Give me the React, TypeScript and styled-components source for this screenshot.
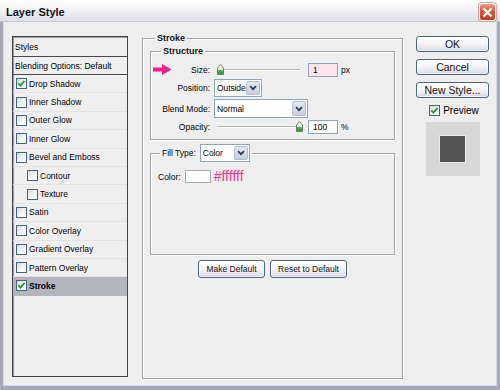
import React from "react";
import styled, { createGlobalStyle } from "styled-components";

const Global = createGlobalStyle`
  html, body { margin: 0; padding: 0; background: #eeeeee; }
  body { font-family: "Liberation Sans", Arial, sans-serif; font-size: 8.5px; color: #000; }
  * { box-sizing: border-box; }
`;

const Window = styled.div`
  width: 500px;
  height: 390px;
  display: flex;
  flex-direction: column;
  background: #eeeeee;
  overflow: hidden;
`;

const TitleBar = styled.div`
  height: 22px;
  flex: none;
  display: flex;
  align-items: flex-start;
  justify-content: space-between;
  padding: 0 4px 0 6px;
  background: linear-gradient(to bottom, #ffffff 0%, #f4f4f8 40%, #dedee8 100%);
  border-bottom: 1px solid #c4c4d2;
`;

const Title = styled.div`
  margin-top: 6px;
  font-size: 11px;
  line-height: 13px;
  font-weight: bold;
  color: #111;
`;

const CloseButton = styled.div`
  margin-top: 3px;
  width: 17px;
  height: 18px;
  border: 1px solid #fff;
  border-radius: 3px;
  background: linear-gradient(to bottom, #eaa18c 0%, #d9573a 45%, #c53a1d 100%);
  box-shadow: 0 0 0 1px #c9a79f;
  display: flex;
  align-items: center;
  justify-content: center;
`;

const Frame = styled.div`
  flex: 1;
  display: flex;
  align-items: flex-start;
  padding: 11px 8px 0 9px;
  border-style: solid;
  border-color: #a8a8b8;
  border-width: 0 3px 4px 3px;
  box-shadow: inset 1px 0 0 #d8d8e2, inset -1px 0 0 #d8d8e2, inset 0 -1px 0 #d8d8e2;
`;

/* ---------- left style list ---------- */

const StylePanel = styled.div`
  margin-top: 3px;
  width: 116px;
  height: 341px;
  flex: none;
  border: 1px solid #444;
  box-shadow: inset 1px 1px 0 #9a9a9a;
  background: #efefef;
  display: flex;
  flex-direction: column;
`;

const PanelHeader = styled.div<{ $h: number }>`
  height: ${(p) => p.$h}px;
  flex: none;
  display: flex;
  align-items: center;
  padding-left: 2px;
  border-bottom: 1px solid #4a4a4a;
  white-space: nowrap;
`;

const StyleRow = styled.div<{ $indent?: boolean; $active?: boolean }>`
  height: 18.4px;
  flex: none;
  display: flex;
  align-items: center;
  gap: 2px;
  padding-left: ${(p) => (p.$indent ? 14 : 3)}px;
  border-bottom: 1px solid ${(p) => (p.$active ? "#b4b4bd" : "#e2e2e2")};
  background: ${(p) => (p.$active ? "#b4b4bd" : "transparent")};
  font-weight: ${(p) => (p.$active ? "bold" : "normal")};
  white-space: nowrap;
`;

const Box = styled.span`
  width: 11px;
  height: 11px;
  flex: none;
  border: 1px solid #3d6585;
  background: linear-gradient(135deg, #dcdcd6 0%, #f6f6f4 60%, #ffffff 100%);
  display: inline-flex;
  align-items: center;
  justify-content: center;
`;

const Check: React.FC<{ checked?: boolean }> = ({ checked }) => (
  <Box>
    {checked && (
      <svg width="9" height="9" viewBox="0 0 9 9">
        <path d="M1.3 4.4 L3.4 6.6 L7.6 1.8" fill="none" stroke="#21a121" strokeWidth="1.8" />
      </svg>
    )}
  </Box>
);

/* ---------- main group ---------- */

const Group = styled.fieldset`
  margin: 0;
  padding: 0;
  min-width: 0;
  border: 1px solid #a4a4a4;
  box-shadow: inset 1px 1px 0 #ffffff, 1px 1px 0 #ffffff;
`;

const MainGroup = styled(Group)`
  margin-left: 14px;
  width: 261px;
  height: 346px;
  flex: none;
  padding: 0 7px;
`;

const SubGroup = styled(Group)<{ $mt: number }>`
  margin-top: ${(p) => p.$mt}px;
`;

const Legend = styled.legend<{ $ml: number }>`
  margin-left: ${(p) => p.$ml}px;
  padding: 0 2px;
  font-size: 9px;
  line-height: 11px;
  font-weight: bold;
  color: #111;
`;

const FillLegend = styled.legend`
  margin-left: 9px;
  padding: 0 2px;
  display: flex;
  align-items: center;
  gap: 4px;
  font-size: 8.5px;
  line-height: 18px;
`;

const StructureBody = styled.div`
  display: flex;
  flex-direction: column;
  gap: 2px;
  padding: 5px 0 5px 0;
`;

const FieldRow = styled.div<{ $h: number }>`
  height: ${(p) => p.$h}px;
  display: grid;
  grid-template-columns: 59px auto;
  column-gap: 4px;
  align-items: center;
`;

const FieldLabel = styled.div`
  display: flex;
  align-items: center;
  justify-content: flex-end;
  gap: 2px;
  white-space: nowrap;
`;

const Controls = styled.div`
  display: flex;
  align-items: center;
  gap: 3px;
  height: 100%;
`;

const SliderWrap = styled.div`
  position: relative;
  width: 91px;
  height: 14px;
  flex: none;
`;

const Track = styled.div`
  position: absolute;
  left: 3px;
  right: 5px;
  top: 6px;
  height: 2px;
  border-top: 1px solid #b5b5b0;
  border-bottom: 1px solid #ffffff;
  background: #d8d8d2;
`;

const Thumb = styled.svg`
  position: absolute;
  top: 1px;
`;

const Slider: React.FC<{ value: number }> = ({ value }) => (
  <SliderWrap>
    <Track />
    <Thumb width="7" height="11" viewBox="0 0 7 11" style={{ left: 3 + (value / 100) * 79 }}>
      <defs>
        <linearGradient id={`tg${value}`} x1="0" y1="0" x2="0" y2="1">
          <stop offset="0" stopColor="#ffffff" />
          <stop offset="0.55" stopColor="#dfe8dc" />
          <stop offset="0.6" stopColor="#4caf4c" />
          <stop offset="1" stopColor="#2f8f2f" />
        </linearGradient>
      </defs>
      <path d="M0.5 4 L3.5 0.6 L6.5 4 V10.5 H0.5 Z" fill={`url(#tg${value})`} stroke="#70806f" strokeWidth="1" />
    </Thumb>
  </SliderWrap>
);

const NumInput = styled.div<{ $pink?: boolean }>`
  width: 30px;
  height: 14px;
  flex: none;
  border: 1px solid #8ea4bc;
  background: ${(p) => (p.$pink ? "#fde3ec" : "#ffffff")};
  padding-left: 4px;
  display: flex;
  align-items: center;
`;

const SelectBox = styled.div<{ $w: number; $h: number }>`
  width: ${(p) => p.$w}px;
  height: ${(p) => p.$h}px;
  flex: none;
  border: 1px solid #8ea4bc;
  background: #fff;
  display: flex;
  align-items: stretch;
  padding: 1px;
`;

const SelectText = styled.div`
  flex: 1;
  min-width: 0;
  display: flex;
  align-items: center;
  padding-left: 1px;
  white-space: nowrap;
  letter-spacing: -0.1px;
`;

const SelectArrow = styled.div`
  width: 14px;
  flex: none;
  border-radius: 2px;
  border: 1px solid #b4bdd0;
  background: linear-gradient(to bottom, #e4e8f0 0%, #c6cedf 100%);
  display: flex;
  align-items: center;
  justify-content: center;
`;

const Select: React.FC<{ w: number; h: number; value: string }> = ({ w, h, value }) => (
  <SelectBox $w={w} $h={h}>
    <SelectText>{value}</SelectText>
    <SelectArrow>
      <svg width="8" height="6" viewBox="0 0 8 6">
        <path d="M1 1.2 L4 4.2 L7 1.2" fill="none" stroke="#2e3a52" strokeWidth="1.7" />
      </svg>
    </SelectArrow>
  </SelectBox>
);

const FillBody = styled.div`
  height: 92px;
  padding: 8px 0 0 7px;
`;

const ColorRow = styled.div`
  height: 13px;
  display: flex;
  align-items: center;
`;

const Swatch = styled.div`
  margin-left: 4px;
  width: 26px;
  height: 13px;
  background: #ffffff;
  border: 1px solid #a9a9a9;
`;

const Hex = styled.span`
  margin-left: 3px;
  font-size: 14px;
  line-height: 13px;
  color: #f0398f;
`;

const ButtonRow = styled.div`
  margin-top: 5px;
  display: flex;
  justify-content: center;
  gap: 5px;
`;

const Button = styled.div<{ $w: number; $h: number; $fs: number }>`
  width: ${(p) => p.$w}px;
  height: ${(p) => p.$h}px;
  flex: none;
  border: 1px solid #4b6580;
  border-radius: 3px;
  background: linear-gradient(to bottom, #ffffff 0%, #f3f3f6 50%, #e2e2ea 85%, #cfd0dc 100%);
  box-shadow: inset 0 0 0 1px rgba(255, 255, 255, 0.6);
  display: flex;
  align-items: center;
  justify-content: center;
  font-size: ${(p) => p.$fs}px;
  white-space: nowrap;
  color: #111;
`;

/* ---------- right column ---------- */

const RightColumn = styled.div`
  margin-top: 3px;
  margin-left: 13px;
  width: 73px;
  flex: none;
  display: flex;
  flex-direction: column;
  align-items: center;
  gap: 7px;
`;

const PreviewToggle = styled.div`
  display: flex;
  align-items: center;
  gap: 3px;
  font-size: 10px;
  margin-left: 3px;
`;

const PreviewBox = styled.div`
  margin-top: -1px;
  width: 54px;
  height: 54px;
  background: #d7d7d7;
  display: flex;
  align-items: center;
  justify-content: center;
`;

const PreviewSwatch = styled.div`
  width: 27px;
  height: 28px;
  background: #545454;
  border: 1px solid #ececec;
`;

const styleItems: { name: string; checked?: boolean; indent?: boolean; active?: boolean }[] = [
  { name: "Drop Shadow", checked: true },
  { name: "Inner Shadow" },
  { name: "Outer Glow" },
  { name: "Inner Glow" },
  { name: "Bevel and Emboss" },
  { name: "Contour", indent: true },
  { name: "Texture", indent: true },
  { name: "Satin" },
  { name: "Color Overlay" },
  { name: "Gradient Overlay" },
  { name: "Pattern Overlay" },
  { name: "Stroke", checked: true, active: true },
];

const PinkArrow = () => (
  <svg width="19" height="11" viewBox="0 0 19 11" style={{ marginRight: 17 }}>
    <path d="M0 3.5 H9 V0 L18.5 5.5 L9 11 V7.5 H0 Z" fill="#ec1e8c" />
  </svg>
);

export default function App() {
  return (
    <>
      <Global />
      <Window>
        <TitleBar>
          <Title>Layer Style</Title>
          <CloseButton>
            <svg width="11" height="11" viewBox="0 0 11 11">
              <path d="M1.5 1.5 L9.5 9.5 M9.5 1.5 L1.5 9.5" stroke="#fff" strokeWidth="2.2" />
            </svg>
          </CloseButton>
        </TitleBar>
        <Frame>
          <StylePanel>
            <PanelHeader $h={20}>Styles</PanelHeader>
            <PanelHeader $h={18}>Blending Options: Default</PanelHeader>
            {styleItems.map((it) => (
              <StyleRow key={it.name} $indent={it.indent} $active={it.active}>
                <Check checked={it.checked} />
                <span>{it.name}</span>
              </StyleRow>
            ))}
          </StylePanel>

          <MainGroup>
            <Legend $ml={5}>Stroke</Legend>
            <SubGroup $mt={2}>
              <Legend $ml={10}>Structure</Legend>
              <StructureBody>
                <FieldRow $h={15}>
                  <FieldLabel>
                    <PinkArrow />
                    Size:
                  </FieldLabel>
                  <Controls>
                    <Slider value={0} />
                    <NumInput $pink>1</NumInput>
                    <span>px</span>
                  </Controls>
                </FieldRow>
                <FieldRow $h={18}>
                  <FieldLabel>Position:</FieldLabel>
                  <Controls>
                    <Select w={48} h={18} value="Outside" />
                  </Controls>
                </FieldRow>
                <FieldRow $h={19}>
                  <FieldLabel>Blend Mode:</FieldLabel>
                  <Controls>
                    <Select w={94} h={19} value="Normal" />
                  </Controls>
                </FieldRow>
                <FieldRow $h={14}>
                  <FieldLabel>Opacity:</FieldLabel>
                  <Controls>
                    <Slider value={100} />
                    <NumInput>100</NumInput>
                    <span>%</span>
                  </Controls>
                </FieldRow>
              </StructureBody>
            </SubGroup>

            <SubGroup $mt={4}>
              <FillLegend>
                <span>Fill Type:</span>
                <Select w={50} h={18} value="Color" />
              </FillLegend>
              <FillBody>
                <ColorRow>
                  <span>Color:</span>
                  <Swatch />
                  <Hex>#ffffff</Hex>
                </ColorRow>
              </FillBody>
            </SubGroup>

            <ButtonRow>
              <Button $w={67} $h={18} $fs={8.5}>Make Default</Button>
              <Button $w={77} $h={18} $fs={8.5}>Reset to Default</Button>
            </ButtonRow>
          </MainGroup>

          <RightColumn>
            <Button $w={73} $h={16} $fs={10.5}>OK</Button>
            <Button $w={73} $h={16} $fs={10.5}>Cancel</Button>
            <Button $w={73} $h={16} $fs={10.5}>New Style...</Button>
            <PreviewToggle>
              <Check checked />
              <span>Preview</span>
            </PreviewToggle>
            <PreviewBox>
              <PreviewSwatch />
            </PreviewBox>
          </RightColumn>
        </Frame>
      </Window>
    </>
  );
}
